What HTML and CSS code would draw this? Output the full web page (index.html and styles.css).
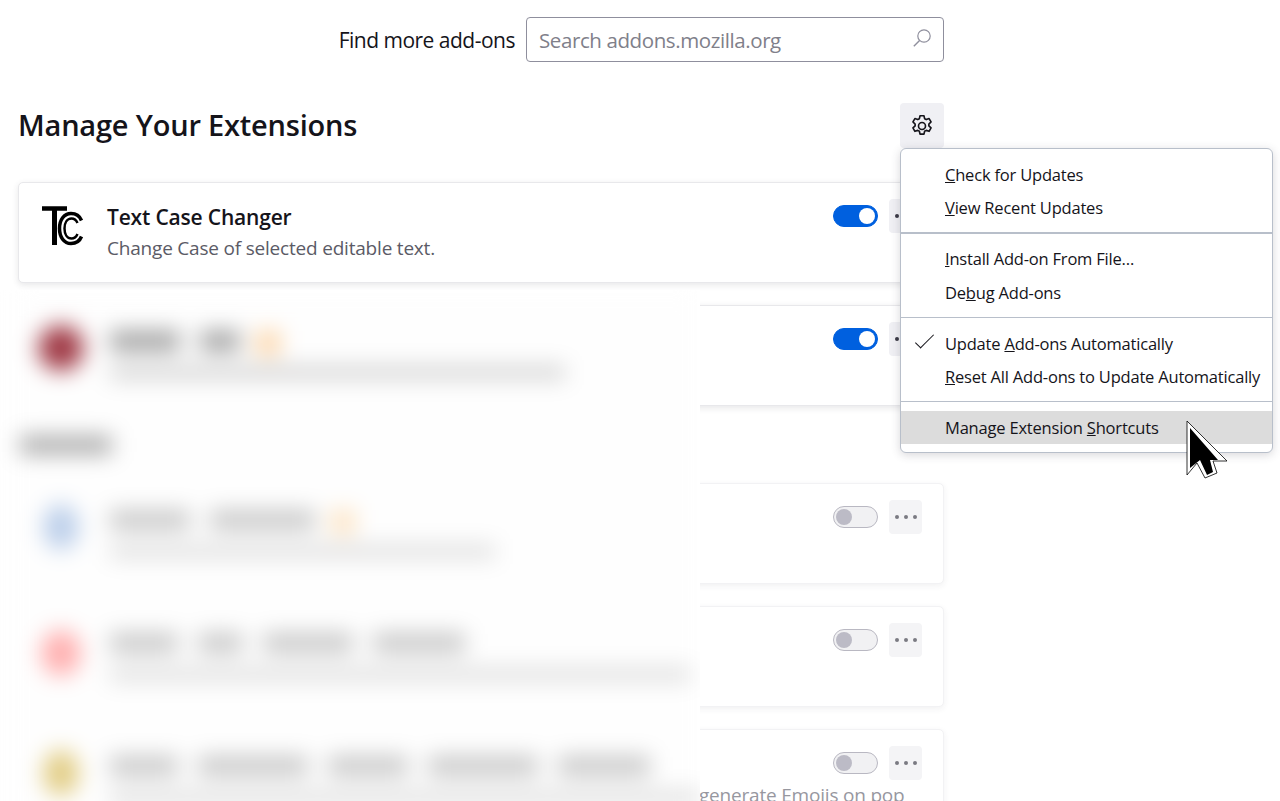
FILE: index.html
```html
<!DOCTYPE html>
<html lang="en">
<head>
    <meta charset="UTF-8">
    <title>Add-ons Manager</title>
    <link rel="stylesheet" href="styles.css">
</head>
<body>
    <div class="content">
        <div class="search-row">
            <label class="search-label">Find more add-ons</label>
            <div class="search-box">
                <span class="search-placeholder">Search addons.mozilla.org</span>
                <svg class="search-icon" width="20" height="20" viewBox="0 0 20 20"><circle cx="12" cy="8" r="6.2" fill="none" stroke="#8f8f9d" stroke-width="1.2"/><path d="M7.6 12.4L1.8 18.2" stroke="#8f8f9d" stroke-width="1.4" fill="none"/></svg>
            </div>
        </div>

        <div class="title-row">
            <h1>Manage Your Extensions</h1>
            <button class="gear-btn">
                <svg width="24" height="24" viewBox="0 0 22 22" fill="none" stroke="#15141a" stroke-width="1.5" stroke-linejoin="round"><path d="M9.2 1.6h3.6l.6 2.7 1.5.8 2.6-.9 1.8 3.1-2 1.9v1.7l2 1.9-1.8 3.1-2.6-.9-1.5.8-.6 2.700H9.200l-.6-2.700-1.500-.8-2.600.9-1.800-3.100 2-1.900V9.200l-2-1.900 1.800-3.100 2.600.9 1.500-.8z"/><circle cx="11" cy="11" r="3.200"/></svg>
            </button>
        </div>

        <div class="card">
            <svg class="ext-icon" width="44" height="44" viewBox="0 0 44 44" fill="none" stroke="#000">
                <path d="M2 4.500h25" stroke-width="4.500"/>
                <path d="M14.500 3v38" stroke-width="5"/>
                <path d="M41.500 16.500C39.500 11.500 35.500 9.500 31 9.500C24 9.500 19.500 16 19.500 24.500C19.500 33 24 39.500 31 39.500C35.500 39.500 39.500 37.500 41.500 32.500" stroke-width="3.500"/>
                <path d="M37.500 19C36 15.500 34 14.500 31.500 14.500C27 14.500 24.500 19 24.500 24.500C24.500 30 27 34.500 31.500 34.500C34 34.500 36 33.500 37.500 30" stroke-width="2.500"/>
            </svg>
            <div class="ext-text">
                <div class="ext-name">Text Case Changer</div>
                <div class="ext-desc">Change Case of selected editable text.</div>
            </div>
            <div class="card-controls">
                <span class="toggle on"></span>
                <button class="more-btn"><i></i><i></i><i></i></button>
            </div>
        </div>

        <div class="card">
            <div class="ext-text"></div>
            <div class="card-controls">
                <span class="toggle on"></span>
                <button class="more-btn"><i></i><i></i><i></i></button>
            </div>
        </div>

        <h2 class="section-title"></h2>

        <div class="card off">
            <div class="ext-text"></div>
            <div class="card-controls">
                <span class="toggle"></span>
                <button class="more-btn"><i></i><i></i><i></i></button>
            </div>
        </div>

        <div class="card off">
            <div class="ext-text"></div>
            <div class="card-controls">
                <span class="toggle"></span>
                <button class="more-btn"><i></i><i></i><i></i></button>
            </div>
        </div>

        <div class="card off">
            <div class="ext-text">
                <div class="ext-name">&nbsp;</div>
                <div class="ext-desc tail">generate Emojis on pop</div>
            </div>
            <div class="card-controls">
                <span class="toggle"></span>
                <button class="more-btn"><i></i><i></i><i></i></button>
            </div>
        </div>
    </div>

    <!-- blurred out part of the screenshot -->
    <div class="blur-window">
        <div class="blur-layer">
            <div class="blur-row first">
                <div class="blob-icon red"></div>
                <div class="blob-lines">
                    <div class="blob-title dark"><span class="w70"></span><span class="w40"></span><b class="blob-star"></b></div>
                    <div class="blob-desc w455"></div>
                </div>
            </div>
            <div class="blob-heading"></div>
            <div class="blur-row second">
                <div class="blob-icon blue"></div>
                <div class="blob-lines">
                    <div class="blob-title"><span class="w80"></span><span class="w105"></span><b class="blob-star pale"></b></div>
                    <div class="blob-desc light w385"></div>
                </div>
            </div>
            <div class="blur-row">
                <div class="blob-icon pink"></div>
                <div class="blob-lines">
                    <div class="blob-title"><span class="w68"></span><span class="w45"></span><span class="w90"></span><span class="w92"></span></div>
                    <div class="blob-desc light w580"></div>
                </div>
            </div>
            <div class="blur-row">
                <div class="blob-icon yellow"></div>
                <div class="blob-lines">
                    <div class="blob-title"><span class="w68"></span><span class="w110"></span><span class="w80"></span><span class="w110"></span><span class="w92"></span></div>
                    <div class="blob-desc light w590"></div>
                </div>
            </div>
        </div>
    </div>

    <div class="menu">
        <div class="menu-item"><u>C</u>heck for Updates</div>
        <div class="menu-item"><u>V</u>iew Recent Updates</div>
        <div class="menu-sep thick"></div>
        <div class="menu-item"><u>I</u>nstall Add-on From File…</div>
        <div class="menu-item">De<u>b</u>ug Add-ons</div>
        <div class="menu-sep"></div>
        <div class="menu-item checked">Update <u>A</u>dd-ons Automatically</div>
        <div class="menu-item"><u>R</u>eset All Add-ons to Update Automatically</div>
        <div class="menu-sep"></div>
        <div class="menu-item hover">Manage Extension <u>S</u>hortcuts</div>
    </div>

    <svg class="cursor" width="44" height="62" viewBox="0 0 44 62">
        <path d="M1 1L41 41H27L31 53L19 58L11 43L1 55Z" fill="#fff" stroke="#000" stroke-width="0.8"/>
        <path d="M4 8L32 40H24L27 52L21 55L14 40L4 48Z" fill="#000"/>
    </svg>
</body>
</html>
```

FILE: styles.css
```css
body {
    margin: 0;
    height: 801px;
    overflow: hidden;
    position: relative;
    background-color: #fff;
    color: #15141a;
    font-family: "Open Sans", "Noto Sans", sans-serif;
}

.content {
    width: 926px;
    margin-left: 18px;
    padding-top: 17px;
}

.search-row {
    display: flex;
    justify-content: flex-end;
    align-items: center;
    gap: 11px;
}

.search-label {
    font-size: 21px;
    letter-spacing: -0.5px;
}

.search-box {
    width: 393px;
    height: 43px;
    border: 1px solid #8f8f9d;
    border-radius: 4px;
    display: flex;
    align-items: center;
    justify-content: space-between;
    padding: 0 11px 0 12px;
}

.search-placeholder {
    font-size: 20.5px;
    letter-spacing: -0.4px;
    color: #80808a;
}

.search-icon {
    margin-top: -4px;
}

.title-row {
    display: flex;
    justify-content: space-between;
    align-items: center;
    margin-top: 41px;
    margin-bottom: 34px;
}

h1 {
    margin: 0 0 2px;
    font-size: 29px;
    font-weight: 600;
    letter-spacing: -0.2px;
}

.gear-btn {
    width: 44px;
    height: 45px;
    border: 0;
    padding: 0;
    border-radius: 4px;
    background-color: #f0f0f4;
    display: flex;
    align-items: center;
    justify-content: center;
}

.card {
    height: 99px;
    border: 1px solid #e8e8eb;
    border-radius: 5px;
    background-color: #fff;
    box-shadow: 0 2px 6px rgba(58,57,68,0.12);
    display: flex;
    padding-left: 22px;
    padding-right: 21px;
    margin-bottom: 22px;
    position: relative;
}

.card.off {
    border-color: #f2f2f4;
    box-shadow: 0 2px 6px rgba(58,57,68,0.07);
}

.ext-icon {
    margin-top: 21px;
    margin-left: -1px;
    margin-right: 1px;
    flex-shrink: 0;
}

.ext-text {
    margin-left: 22px;
    padding-top: 20px;
    flex: 1;
    min-width: 0;
}

.ext-name {
    font-size: 21px;
    font-weight: 600;
    letter-spacing: -0.18px;
    line-height: 28px;
}

.ext-desc {
    font-size: 19px;
    letter-spacing: -0.2px;
    line-height: 26px;
    margin-top: 4px;
    color: #5b5b66;
    white-space: nowrap;
}

.ext-desc.tail {
    padding-left: 636px;
    color: #97979f;
}

.card-controls {
    display: flex;
    gap: 11px;
    padding-top: 16px;
    align-items: flex-start;
}

.toggle {
    width: 45px;
    height: 22px;
    margin-top: 6px;
    box-sizing: border-box;
    border: 1px solid #b9b8c2;
    border-radius: 11px;
    background-color: #f1f1f3;
    position: relative;
    flex-shrink: 0;
}

.toggle::after {
    content: "";
    width: 16px;
    height: 16px;
    border-radius: 50%;
    background-color: #bcbbc6;
    position: absolute;
    top: 2px;
    left: 2px;
}

.toggle.on {
    border-color: #0060df;
    background-color: #0060df;
}

.toggle.on::after {
    background-color: #fff;
    left: auto;
    right: 2px;
}

.more-btn {
    width: 33px;
    height: 34px;
    border: 0;
    padding: 0;
    border-radius: 4px;
    background-color: #f0f0f4;
    display: flex;
    align-items: center;
    justify-content: center;
    gap: 5px;
}

.more-btn i {
    width: 4px;
    height: 4px;
    background-color: #3a3944;
    border-radius: 50%;
}

.card.off .more-btn {
    background-color: #f4f4f6;
}

.card.off .more-btn i {
    background-color: #7a7a82;
}

.section-title {
    height: 55px;
    margin: 0;
}

/* blur */
.blur-window {
    position: absolute;
    left: 0;
    top: 290px;
    width: 700px;
    height: 511px;
    overflow: hidden;
    background-color: #fff;
}

.blur-layer {
    margin-left: 12px;
    height: 560px;
    padding-top: 13px;
    background-color: #fefefe;
    filter: blur(11px);
}

.blur-row {
    display: flex;
    padding-left: 26px;
    height: 123px;
}

.blur-row.first {
    height: 133px;
}

.blur-row.second {
    margin-top: 28px;
}

.blob-icon {
    width: 46px;
    height: 46px;
    border-radius: 50%;
    margin-top: 22px;
    flex-shrink: 0;
}

.blob-icon.red { background-color: #a03a46; }
.blob-icon.blue { background-color: #bccfea; width: 36px; margin-left: 5px; margin-right: 5px; }
.blob-icon.pink { background-color: #ffb0b0; width: 40px; margin-left: 3px; margin-right: 3px; margin-top: 25px; }
.blob-icon.yellow { background-color: #e2cd85; width: 36px; margin-left: 5px; margin-right: 5px; }

.blob-lines {
    margin-left: 26px;
}

.blob-title {
    height: 20px;
    margin-top: 28px;
    display: flex;
    gap: 20px;
}

.blob-title span {
    background-color: #c8c8c8;
}

.blob-title.dark span {
    background-color: #a0a0a0;
}

.blob-star {
    width: 24px;
    height: 24px;
    margin-left: -4px;
    background-color: #fcd4a6;
}

.blob-star.pale {
    background-color: #fce2c0;
}

.blob-desc {
    height: 13px;
    margin-top: 15px;
    background-color: #d0d0d0;
}

.blob-desc.light {
    background-color: #dcdcdc;
}

.blob-heading {
    width: 92px;
    height: 18px;
    margin-left: 8px;
    background-color: #a8a8a8;
}

.w40 { width: 40px; }
.w45 { width: 45px; }
.w68 { width: 68px; }
.w70 { width: 70px; }
.w80 { width: 80px; }
.w90 { width: 90px; }
.w92 { width: 92px; }
.w105 { width: 105px; }
.w110 { width: 110px; }
.w385 { width: 385px; }
.w455 { width: 455px; }
.w580 { width: 580px; }
.w590 { width: 590px; }

/* menu */
.menu {
    position: absolute;
    left: 900px;
    top: 148px;
    width: 371px;
    border: 1px solid #b8bfca;
    border-radius: 6px;
    background-color: #fff;
    box-shadow: 0 2px 10px rgba(58,57,68,0.2);
    padding: 9px 0 8px;
    font-size: 16.5px;
    letter-spacing: -0.2px;
}

.menu-item {
    height: 33px;
    line-height: 33px;
    padding-left: 44px;
    white-space: nowrap;
    position: relative;
}

.menu-item.hover {
    background-color: #dcdcdc;
}

.menu-item.checked::before {
    content: "";
    position: absolute;
    left: 14px;
    top: 8px;
    width: 18px;
    height: 7px;
    border-left: 1.5px solid #15141a;
    border-bottom: 1.5px solid #15141a;
    transform: rotate(-45deg);
}

.menu-sep {
    height: 1px;
    background-color: #b8bfca;
    margin: 8px 0 9px;
}

.menu-sep.thick {
    height: 2px;
    margin-bottom: 8px;
}

.menu-sep.thick + .menu-item {
    margin-bottom: 1px;
}

.cursor {
    position: absolute;
    left: 1186px;
    top: 420px;
}
```
